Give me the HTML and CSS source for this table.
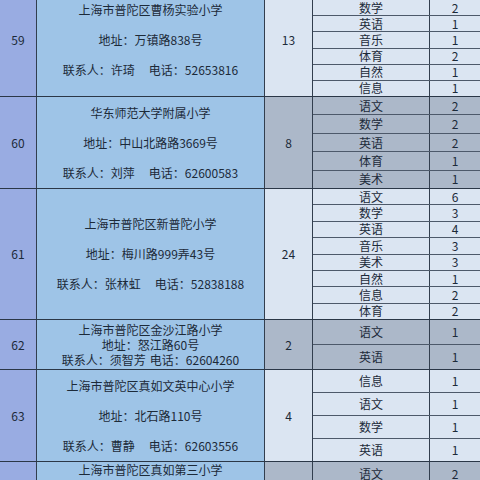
FILE: index.html
```html
<!DOCTYPE html>
<html lang="zh-CN">
<head>
<meta charset="utf-8">
<title>学校名单</title>
<link rel="stylesheet" href="styles.css">
</head>
<body>
<div class="table">
  <div class="group g59 light">
    <div class="c num">59</div>
    <div class="c info">
      <div>上海市普陀区曹杨实验小学</div>
      <div>地址：万镇路838号</div>
      <div>联系人：许琦<span class="gap"></span>电话：52653816</div>
    </div>
    <div class="c total">13</div>
    <div class="subjects">
      <div class="srow"><div class="subj">语文</div><div class="cnt">5</div></div>
      <div class="srow"><div class="subj">数学</div><div class="cnt">2</div></div>
      <div class="srow"><div class="subj">英语</div><div class="cnt">1</div></div>
      <div class="srow"><div class="subj">音乐</div><div class="cnt">1</div></div>
      <div class="srow"><div class="subj">体育</div><div class="cnt">2</div></div>
      <div class="srow"><div class="subj">自然</div><div class="cnt">1</div></div>
      <div class="srow"><div class="subj">信息</div><div class="cnt">1</div></div>
    </div>
  </div>

  <div class="group g60 dark">
    <div class="c num">60</div>
    <div class="c info">
      <div>华东师范大学附属小学</div>
      <div>地址：中山北路路3669号</div>
      <div>联系人：刘萍<span class="gap"></span>电话：62600583</div>
    </div>
    <div class="c total">8</div>
    <div class="subjects">
      <div class="srow"><div class="subj">语文</div><div class="cnt">2</div></div>
      <div class="srow"><div class="subj">数学</div><div class="cnt">2</div></div>
      <div class="srow"><div class="subj">英语</div><div class="cnt">2</div></div>
      <div class="srow"><div class="subj">体育</div><div class="cnt">1</div></div>
      <div class="srow"><div class="subj">美术</div><div class="cnt">1</div></div>
    </div>
  </div>

  <div class="group g61 light">
    <div class="c num">61</div>
    <div class="c info">
      <div>上海市普陀区新普陀小学</div>
      <div>地址：梅川路999弄43号</div>
      <div>联系人：张林虹<span class="gap"></span>电话：52838188</div>
    </div>
    <div class="c total">24</div>
    <div class="subjects">
      <div class="srow"><div class="subj">语文</div><div class="cnt">6</div></div>
      <div class="srow"><div class="subj">数学</div><div class="cnt">3</div></div>
      <div class="srow"><div class="subj">英语</div><div class="cnt">4</div></div>
      <div class="srow"><div class="subj">音乐</div><div class="cnt">3</div></div>
      <div class="srow"><div class="subj">美术</div><div class="cnt">3</div></div>
      <div class="srow"><div class="subj">自然</div><div class="cnt">1</div></div>
      <div class="srow"><div class="subj">信息</div><div class="cnt">2</div></div>
      <div class="srow"><div class="subj">体育</div><div class="cnt">2</div></div>
    </div>
  </div>

  <div class="group g62 dark">
    <div class="c num">62</div>
    <div class="c info tight">
      <div>上海市普陀区金沙江路小学</div>
      <div>地址：怒江路60号</div>
      <div>联系人：须智芳<span class="gap-s"></span>电话：62604260</div>
    </div>
    <div class="c total">2</div>
    <div class="subjects">
      <div class="srow"><div class="subj">语文</div><div class="cnt">1</div></div>
      <div class="srow"><div class="subj">英语</div><div class="cnt">1</div></div>
    </div>
  </div>

  <div class="group g63 light">
    <div class="c num">63</div>
    <div class="c info">
      <div>上海市普陀区真如文英中心小学</div>
      <div>地址：北石路110号</div>
      <div>联系人：曹静<span class="gap"></span>电话：62603556</div>
    </div>
    <div class="c total">4</div>
    <div class="subjects">
      <div class="srow"><div class="subj">信息</div><div class="cnt">1</div></div>
      <div class="srow"><div class="subj">语文</div><div class="cnt">1</div></div>
      <div class="srow"><div class="subj">数学</div><div class="cnt">1</div></div>
      <div class="srow"><div class="subj">英语</div><div class="cnt">1</div></div>
    </div>
  </div>

  <div class="group g64 dark">
    <div class="c num"></div>
    <div class="c info tight top">
      <div>上海市普陀区真如第三小学</div>
    </div>
    <div class="c total"></div>
    <div class="subjects">
      <div class="srow fixed"><div class="subj">语文</div><div class="cnt">2</div></div>
    </div>
  </div>
</div>
</body>
</html>
```
FILE: styles.css
```css
html, body {
  margin: 0;
  padding: 0;
  width: 480px;
  height: 480px;
  overflow: hidden;
  background: #ffffff;
}

body {
  font-family: "Noto Sans CJK SC", "Noto Sans", sans-serif;
  font-size: 12px;
  line-height: 14px;
  color: #1c2a39;
}

.table {
  width: 480px;
  margin-top: -16px;
}

.group {
  display: flex;
  box-sizing: border-box;
  border-bottom: 1px solid #2b3747;
  overflow: hidden;
}

.g59 { height: 113px; }
.g60 { height: 92px; }
.g61 { height: 131px; }
.g62 { height: 50px; }
.g63 { height: 92px; }
.g64 { height: 60px; }

.c {
  display: flex;
  align-items: center;
  justify-content: center;
  box-sizing: border-box;
  border-right: 1px solid #323e4e;
}

.num {
  width: 37px;
  flex: none;
  background: #99ace2;
}

.info {
  width: 228px;
  flex: none;
  flex-direction: column;
  background: #9ec4e7;
}

.info div {
  line-height: 30px;
  white-space: nowrap;
}

.info.tight div {
  line-height: 15px;
}

.info.top {
  justify-content: flex-start;
}

.gap {
  display: inline-block;
  width: 14px;
}

.gap-s {
  display: inline-block;
  width: 4px;
}

.total {
  width: 48px;
  flex: none;
}

.subjects {
  flex: 1;
  display: flex;
  flex-direction: column;
  min-height: 0;
}

.srow {
  flex: 1 1 0;
  min-height: 0;
  display: flex;
  border-bottom: 1px solid #4d596a;
  overflow: hidden;
}

.srow:last-child {
  border-bottom: 0;
}

.srow.fixed {
  flex: none;
  height: 23px;
}

.subj {
  width: 117px;
  flex: none;
  display: flex;
  align-items: center;
  justify-content: center;
  box-sizing: border-box;
  border-right: 1px solid #323e4e;
}

.cnt {
  flex: 1;
  display: flex;
  align-items: center;
  justify-content: center;
}

.light .total,
.light .subjects {
  background: #dbe5f2;
}

.dark .total,
.dark .subjects {
  background: #acb8c9;
}
```
